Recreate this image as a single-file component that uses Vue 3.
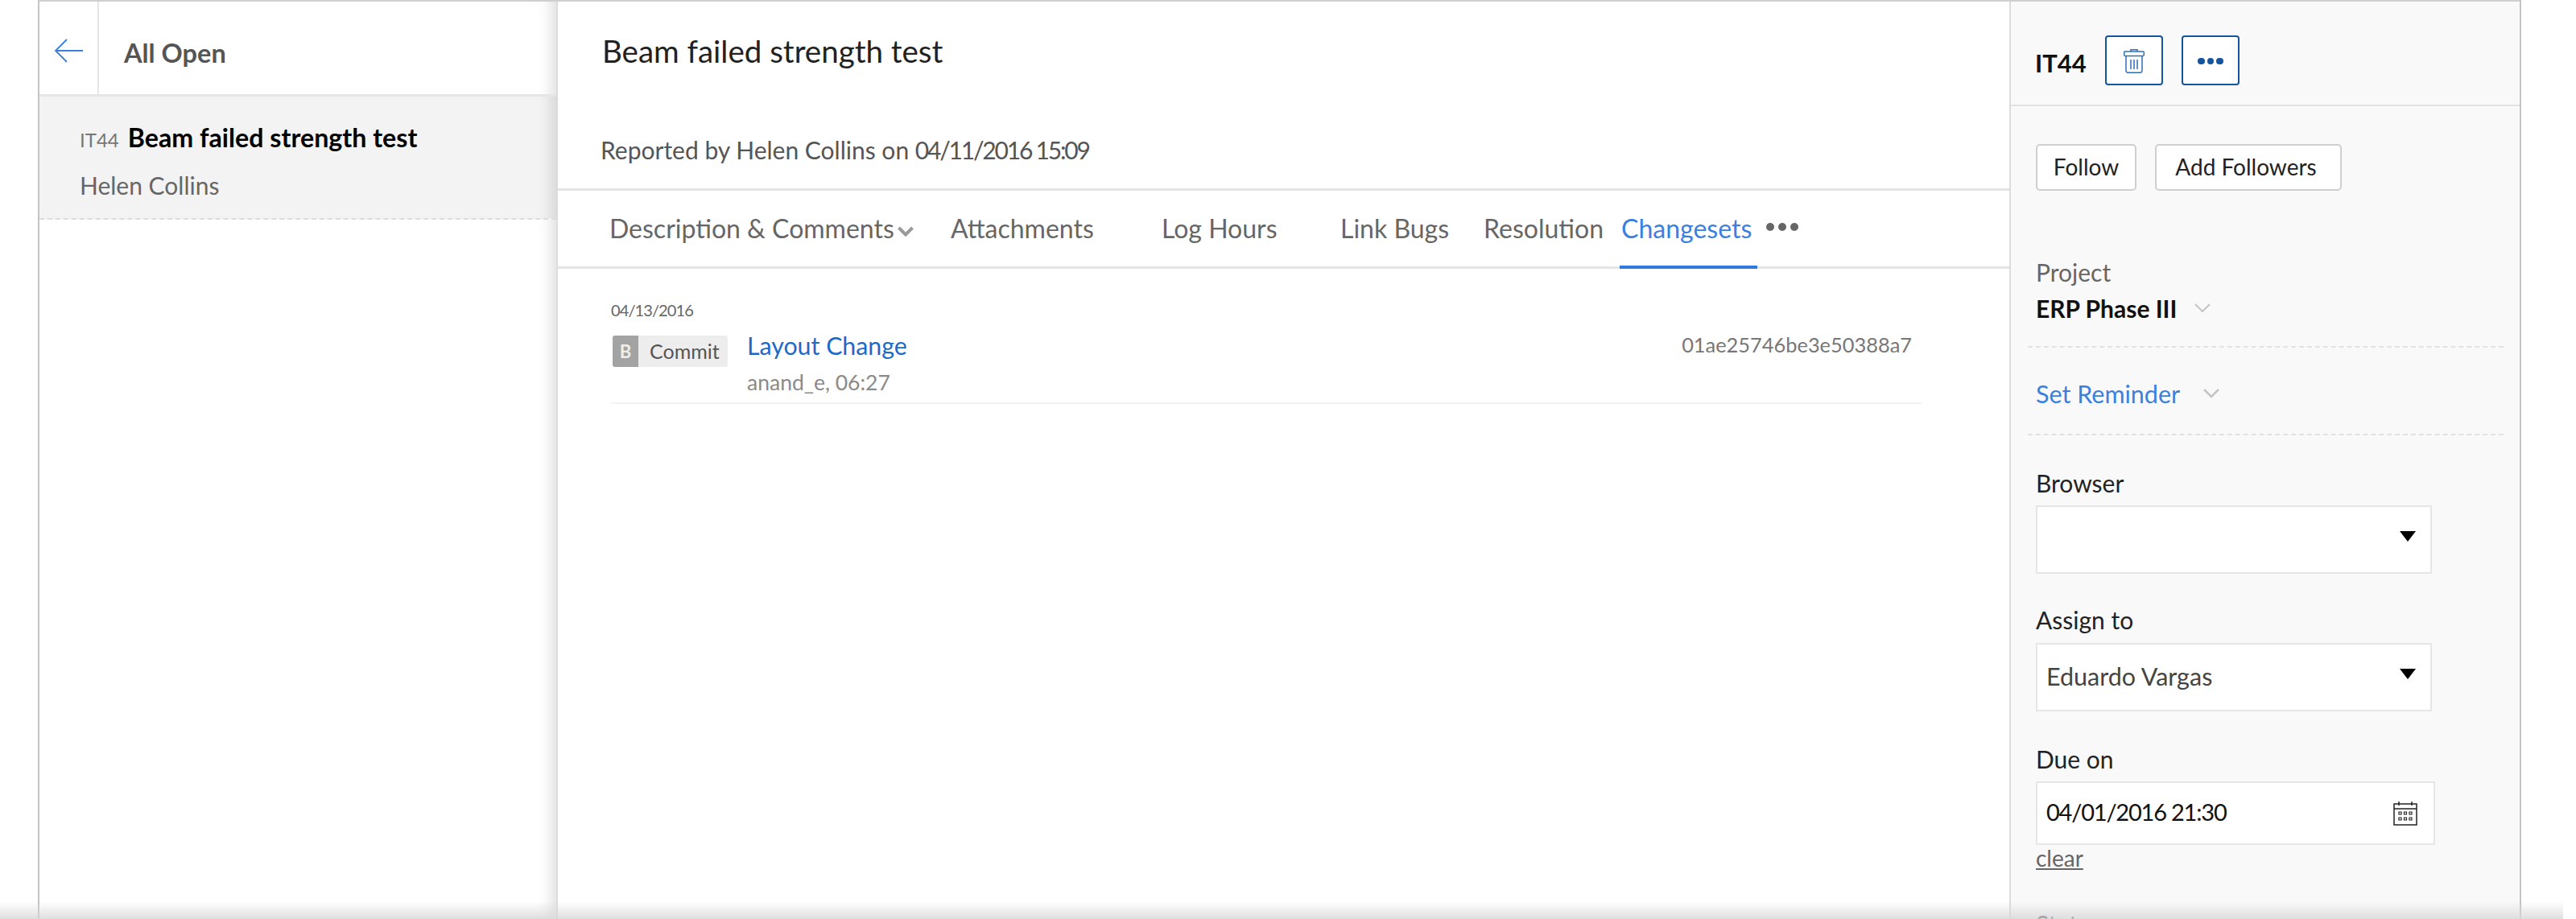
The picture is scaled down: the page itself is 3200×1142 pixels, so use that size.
<script setup>
const tabs = [
  { label: 'Description & Comments', cls: 'tab-desc', caret: true },
  { label: 'Attachments', cls: 'tab-att' },
  { label: 'Log Hours', cls: 'tab-log' },
  { label: 'Link Bugs', cls: 'tab-link' },
  { label: 'Resolution', cls: 'tab-res' },
  { label: 'Changesets', cls: 'tab-chg', active: true }
]
</script>

<template>
  <div class="page">
    <div class="shell">
      <aside class="list">
        <header class="list-head">
          <div class="back">
            <svg width="36" height="30" viewBox="0 0 36 30" fill="none" stroke="#3b80de" stroke-width="1.8">
              <path d="M36 15H2M16 1 2 15l14 14" />
            </svg>
          </div>
          <div class="list-title">All Open</div>
        </header>
        <div class="row">
          <div class="row-top"><span class="row-id">IT44</span><span class="row-name">Beam failed strength test</span></div>
          <div class="row-author">Helen Collins</div>
        </div>
      </aside>

      <main class="detail">
        <div class="detail-head">
          <h1 class="title">Beam failed strength test</h1>
          <p class="reported">Reported by Helen Collins on <span class="num">04/11/2016 15:09</span></p>
        </div>
        <nav class="tabs">
          <div v-for="t in tabs" :key="t.label" class="tab" :class="[t.cls, { active: t.active }]">
            {{ t.label }}
            <svg v-if="t.caret" class="caret" width="20" height="13" viewBox="0 0 20 13" fill="none" stroke="#9a9a9a" stroke-width="4">
              <path d="M1.5 2 10 10.500 18.500 2" />
            </svg>
          </div>
          <div class="tab-more"><i></i><i></i><i></i></div>
        </nav>
        <section class="changes">
          <div class="date">04/13/2016</div>
          <div class="commit">
            <div class="badge"><span class="badge-b">B</span><span class="badge-t">Commit</span></div>
            <div class="commit-main">
              <a class="commit-title">Layout Change</a>
              <div class="commit-meta">anand_e, 06:27</div>
            </div>
            <div class="hash">01ae25746be3e50388a7</div>
          </div>
        </section>
      </main>

      <aside class="side">
        <header class="side-head">
          <span class="side-id">IT44</span>
          <button class="icon-btn trash">
            <svg width="26" height="30" viewBox="0 0 26 30" fill="none" stroke="#2f6fb5" stroke-width="1.5">
              <path d="M9 3V.8h8V3M2 3h22a1.300 1.300 0 0 1 1.300 1.300v2.900A1.300 1.300 0 0 1 24 8.500H2A1.300 1.300 0 0 1 .7 7.200V4.300A1.300 1.300 0 0 1 2 3ZM3 8.500V27a2.500 2.500 0 0 0 2.500 2.300h15A2.500 2.500 0 0 0 23 27V8.500M9 13v12M13 13v12M17 13v12" />
            </svg>
          </button>
          <button class="icon-btn more"><i></i><i></i><i></i></button>
        </header>

        <div class="follow">
          <button class="plain follow-btn">Follow</button>
          <button class="plain add-btn">Add Followers</button>
        </div>

        <div class="project">
          <div class="muted-label">Project</div>
          <div class="project-val">ERP Phase III
            <svg width="20" height="12" viewBox="0 0 20 12" fill="none" stroke="#c4c4c4" stroke-width="2"><path d="M1 1l9 9 9-9" /></svg>
          </div>
        </div>

        <div class="reminder">
          <span>Set Reminder</span>
          <svg width="20" height="12" viewBox="0 0 20 12" fill="none" stroke="#c4c4c4" stroke-width="2.500"><path d="M1 1l9 9 9-9" /></svg>
        </div>

        <div class="field field-browser">
          <label>Browser</label>
          <div class="select"><span></span><b class="tri"></b></div>
        </div>
        <div class="field field-assign">
          <label>Assign to</label>
          <div class="select"><span class="select-text">Eduardo Vargas</span><b class="tri"></b></div>
        </div>
        <div class="field field-due">
          <label>Due on</label>
          <div class="date-input">
            <span class="num-dark">04/01/2016 21:30</span>
            <svg width="30" height="30" viewBox="0 0 30 30" fill="none" stroke="#222" stroke-width="1.500">
              <path d="M1 3h28v26H1zM1 9h28M7 0v5M23 0v5" />
              <path d="M7 13h3v3H7zM13.500 13h3v3h-3zM20 13h3v3h-3zM7 20h3v3H7zM13.500 20h3v3h-3zM20 20h3v3h-3z" stroke-width="1.200" />
            </svg>
          </div>
          <a class="clear">clear</a>
        </div>
        <div class="field field-status"><label>Status</label></div>
      </aside>
    </div>
    <div class="fade"></div>
  </div>
</template>

<style>
html, body { margin: 0; background: #fff; }
</style>

<style scoped>
.page {
  position: relative;
  width: 3200px;
  height: 1142px;
  overflow: hidden;
  padding-left: 47px;
  box-sizing: border-box;
  background: #fff;
  font-family: Lato, "Open Sans", sans-serif;
}
.shell {
  display: flex;
  width: 3085px;
  height: 1142px;
  box-sizing: border-box;
  border-top: 2px solid #cfcfcf;
  border-left: 2px solid #c4c4c4;
  border-right: 2px solid #c4c4c4;
}
.list {
  width: 644px;
  flex: none;
  box-sizing: border-box;
  border-right: 2px solid #dcdcdc;
  box-shadow: inset -20px 0 18px -14px rgba(0, 0, 0, 0.13);
}
.list-head {
  display: flex;
  height: 118px;
  box-sizing: border-box;
  border-bottom: 3px solid #e6e6e6;
}
.back {
  width: 74px;
  box-sizing: border-box;
  border-right: 2px solid #e6e6e6;
  padding: 46px 0 0 18px;
}
.back svg { display: block; }
.list-title {
  padding: 44px 0 0 31px;
  font-size: 32.5px;
  line-height: 40px;
  font-weight: 700;
  color: #555;
}
.row {
  height: 153px;
  box-sizing: border-box;
  background: #f3f3f3;
  border-bottom: 2px dashed #dcdcdc;
  padding: 31px 0 0 50px;
  box-shadow: inset -20px 0 18px -14px rgba(0, 0, 0, 0.13);
}
.row-top { display: flex; align-items: baseline; height: 40px; line-height: 40px; }
.row-id { font-size: 24px; color: #777; margin-right: 11px; }
.row-name { font-size: 32.2px; font-weight: 700; color: #000; }
.row-author { margin-top: 20px; font-size: 30px; line-height: 38px; color: #666; }

.detail {
  width: 1803px;
  flex: none;
  background: #fff;
}
.detail-head {
  height: 232px;
  box-sizing: border-box;
  padding: 38px 0 0 55px;
}
.title {
  margin: 0;
  font-size: 38.5px;
  line-height: 46px;
  font-weight: 400;
  color: #222;
}
.reported {
  margin: 80px 0 0 -2px;
  font-size: 30px;
  line-height: 40px;
  color: #555;
}
.num { letter-spacing: -2.2px; }
.tabs {
  display: flex;
  height: 100px;
  box-sizing: border-box;
  border-top: 3px solid #e4e4e4;
  border-bottom: 3px solid #e4e4e4;
}
.tab {
  position: relative;
  flex: none;
  display: flex;
  align-items: center;
  height: 94px;
  padding-bottom: 2px;
  font-size: 32px;
  color: #666;
  white-space: nowrap;
  box-sizing: border-box;
}
.tab-desc { margin-left: 64px; width: 424px; }
.tab-att { width: 262px; }
.tab-log { width: 222px; }
.tab-link { width: 178px; }
.tab-res { width: 169px; }
.tab-chg { width: 171px; padding-left: 2px; }
.caret { margin: 8px 0 0 4px; }
.tab.active { color: #3b80de; }
.tab.active::after {
  content: "";
  position: absolute;
  left: 0;
  right: 0;
  bottom: -3px;
  height: 4px;
  background: #3279dc;
}
.tab-more { display: flex; align-items: center; gap: 5px; margin-left: 11px; height: 90px; }
.tab-more i { width: 10px; height: 10px; border-radius: 50%; background: #666; }

.changes { padding: 37px 0 0 66px; width: 1694px; box-sizing: border-box; }
.date { font-size: 20px; letter-spacing: -0.9px; line-height: 28px; color: #666; }
.commit {
  display: flex;
  height: 103px;
  box-sizing: border-box;
  border-bottom: 2px solid #f2f2f2;
  padding-top: 13px;
}
.badge {
  display: flex;
  flex: none;
  width: 143px;
  height: 39px;
  margin: 5px 0 0 2px;
  border-radius: 3px;
  overflow: hidden;
  background: #ededed;
  font-size: 25px;
}
.badge-b {
  width: 32px;
  text-align: center;
  line-height: 39px;
  background: #a3a3a3;
  color: #eee;
  font-weight: 700;
  font-size: 22px;
}
.badge-t { padding-left: 14px; line-height: 39px; color: #555; }
.commit-main { margin-left: 24px; flex: 1; }
.commit-title { display: block; margin-top: -2px; font-size: 30.3px; line-height: 38px; color: #1b6ac9; }
.commit-meta { margin-top: 11px; font-size: 26.5px; line-height: 32px; color: #8a8a8a; }
.hash { margin-top: -1px; padding-right: 12px; font-size: 25.4px; line-height: 34px; color: #777; }

.side {
  flex: 1;
  background: #f9f9f9;
  border-left: 2px solid #dcdcdc;
  box-sizing: border-box;
}
.side-head {
  display: flex;
  align-items: center;
  height: 130px;
  box-sizing: border-box;
  border-bottom: 2px solid #e2e2e2;
  padding: 18px 0 0 30px;
}
.side-id { font-size: 31px; font-weight: 700; color: #111; width: 87px; margin-top: 6px; }
.icon-btn {
  width: 72px;
  height: 62px;
  padding: 0;
  background: #fff;
  border: 2px solid #15549f;
  border-radius: 4px;
  display: flex;
  align-items: center;
  justify-content: center;
  gap: 3px;
}
.icon-btn.trash { margin-right: 23px; }
.icon-btn.trash svg { margin-top: 2px; }
.icon-btn.more i { width: 8.500px; height: 8.500px; margin-top: 2px; border-radius: 50%; background: #15549f; }
.follow { display: flex; gap: 23px; padding: 47px 0 0 31px; }
.plain {
  height: 58px;
  box-sizing: border-box;
  background: #fff;
  border: 2px solid #cfcfcf;
  border-radius: 5px;
  font-family: inherit;
  font-size: 28px;
  color: #222;
  padding: 0 0 2px;
}
.follow-btn { width: 125px; }
.add-btn { width: 232px; padding-right: 6px; }
.project {
  margin: 83px 20px 0 21px;
  padding-left: 10px;
  border-bottom: 2px dashed #e2e2e2;
  height: 112px;
  box-sizing: border-box;
}
.muted-label { font-size: 30px; line-height: 36px; color: #666; }
.project-val {
  font-size: 30px;
  line-height: 36px;
  font-weight: 700;
  color: #111;
  margin-top: 9px;
  display: flex;
  align-items: center;
  gap: 22px;
}
.reminder {
  margin: 0 20px 0 21px;
  padding: 7px 0 0 10px;
  height: 109px;
  box-sizing: border-box;
  border-bottom: 2px dashed #e2e2e2;
  display: flex;
  align-items: center;
  gap: 29px;
  font-size: 30.5px;
  color: #3b80de;
}
.field { padding-left: 31px; }
.field label { display: block; font-size: 30px; line-height: 36px; color: #222; }
.field-browser { margin-top: 41px; }
.field-assign { margin-top: 39px; }
.field-due { margin-top: 41px; }
.field-status { margin-top: 48px; }
.select {
  display: flex;
  align-items: center;
  justify-content: space-between;
  width: 492px;
  height: 85px;
  box-sizing: border-box;
  border: 2px solid #e6e6e6;
  background: #fff;
  margin-top: 10px;
  padding: 0 18px 0 11px;
  font-size: 30.5px;
  color: #444;
}
.field-assign .select { margin-top: 11px; }
.select-text { margin-bottom: 4px; }
.tri {
  width: 0;
  height: 0;
  border-left: 10px solid transparent;
  border-right: 10px solid transparent;
  border-top: 13px solid #000;
  margin-bottom: 8px;
}
.date-input {
  display: flex;
  align-items: center;
  justify-content: space-between;
  width: 496px;
  height: 79px;
  box-sizing: border-box;
  border: 2px solid #e6e6e6;
  background: #fff;
  margin-top: 10px;
  padding: 0 20px 0 11px;
  font-size: 29px;
  color: #111;
}
.num-dark { letter-spacing: -1.2px; margin-bottom: 4px; }
.clear {
  display: block;
  font-size: 28px;
  line-height: 32px;
  color: #666;
  text-decoration: underline;
}
.fade {
  position: absolute;
  left: 0;
  width: 3184px;
  bottom: 0;
  height: 22px;
  background: linear-gradient(to bottom, rgba(220, 220, 220, 0), rgba(215, 215, 215, 0.8));
  pointer-events: none;
}
</style>
